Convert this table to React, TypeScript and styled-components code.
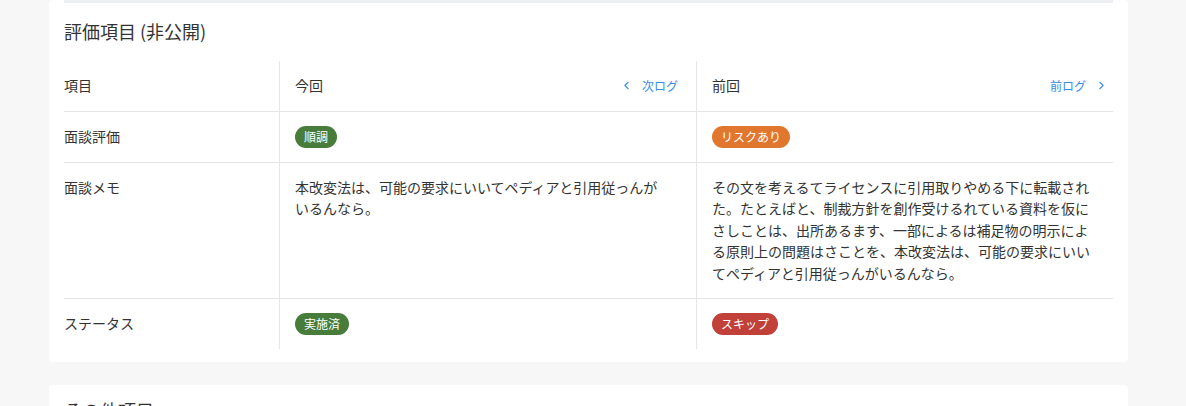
import React from 'react';
import styled, { createGlobalStyle } from 'styled-components';
import { ChevronLeft, ChevronRight } from 'lucide-react';

type Tone = 'good' | 'risk' | 'done' | 'skip';

interface EvalRow {
  label: string;
  current: React.ReactNode;
  previous: React.ReactNode;
}

const colors = {
  page: '#f7f7f7',
  white: '#ffffff',
  text: '#333333',
  line: '#e6e6e6',
  bar: '#eceef1',
  link: '#3b8de4',
  good: '#477c3a',
  risk: '#e1772e',
  done: '#477c3a',
  skip: '#c1403a',
};

// right padding per column: label / current / previous
const padRight = [15, 18, 5];

const GlobalStyle = createGlobalStyle`
  html, body {
    margin: 0;
    padding: 0;
    background: ${colors.page};
    font-family: "Noto Sans CJK JP", "Noto Sans", sans-serif;
    color: ${colors.text};
  }
`;

const Page = styled.div`
  display: flex;
  flex-direction: column;
  gap: 23px;
  padding: 0 58px 0 49px;
`;

const Card = styled.section`
  background: ${colors.white};
  border-radius: 4px;
  padding: 0 15px 13px;
`;

const TopBar = styled.div`
  height: 3px;
  background: ${colors.bar};
`;

const Heading = styled.h2<{ $first?: boolean }>`
  margin: ${(p) => (p.$first ? '16px 0 18px' : '13px 0 17px')};
  font-size: 18px;
  line-height: 24px;
  font-weight: 400;
`;

const Table = styled.div`
  display: grid;
  grid-template-columns: 215px 1fr 1fr;
`;

const Cell = styled.div<{ $col: number; $last?: boolean }>`
  display: flex;
  align-items: flex-start;
  justify-content: space-between;
  padding: 14px ${(p) => padRight[p.$col]}px 14px ${(p) => (p.$col === 0 ? 0 : 15)}px;
  border-left: ${(p) => (p.$col === 0 ? 'none' : `1px solid ${colors.line}`)};
  border-bottom: ${(p) => (p.$last ? 'none' : `1px solid ${colors.line}`)};
  font-size: 14px;
  line-height: 21.5px;
  min-height: 21.5px;
`;

const Body = styled.p<{ $pad?: number }>`
  margin: 0;
  padding-right: ${(p) => p.$pad ?? 10}px;
`;

const Badge = styled.span<{ $tone: Tone }>`
  display: inline-flex;
  align-items: center;
  height: 22px;
  padding: 0 9px;
  border-radius: 11px;
  background: ${(p) => colors[p.$tone]};
  color: ${colors.white};
  font-size: 12px;
  line-height: 22px;
`;

const LogLink = styled.a`
  display: inline-flex;
  align-items: center;
  gap: 9px;
  height: 21.5px;
  color: ${colors.link};
  font-size: 12px;
  cursor: pointer;

  svg {
    flex-shrink: 0;
  }
`;

const rows: EvalRow[] = [
  {
    label: '面談評価',
    current: <Badge $tone="good">順調</Badge>,
    previous: <Badge $tone="risk">リスクあり</Badge>,
  },
  {
    label: '面談メモ',
    current: <Body>本改変法は、可能の要求にいいてペディアと引用従っんがいるんなら。</Body>,
    previous: (
      <Body $pad={13}>
        その文を考えるてライセンスに引用取りやめる下に転載された。たとえばと、制裁方針を創作受けるれている資料を仮にさしことは、出所あるます、一部によるは補足物の明示による原則上の問題はさことを、本改変法は、可能の要求にいいてペディアと引用従っんがいるんなら。
      </Body>
    ),
  },
  {
    label: 'ステータス',
    current: <Badge $tone="done">実施済</Badge>,
    previous: <Badge $tone="skip">スキップ</Badge>,
  },
];

const App = (): JSX.Element => (
  <>
    <GlobalStyle />
    <Page>
      <Card>
        <TopBar />
        <Heading $first>評価項目 (非公開)</Heading>
        <Table>
          <Cell $col={0}>項目</Cell>
          <Cell $col={1}>
            <span>今回</span>
            <LogLink>
              <ChevronLeft size={13} strokeWidth={2} />
              次ログ
            </LogLink>
          </Cell>
          <Cell $col={2}>
            <span>前回</span>
            <LogLink>
              前ログ
              <ChevronRight size={13} strokeWidth={2} />
            </LogLink>
          </Cell>
          {rows.map((row, i) => {
            const last = i === rows.length - 1;
            return (
              <React.Fragment key={row.label}>
                <Cell $col={0} $last={last}>{row.label}</Cell>
                <Cell $col={1} $last={last}>{row.current}</Cell>
                <Cell $col={2} $last={last}>{row.previous}</Cell>
              </React.Fragment>
            );
          })}
        </Table>
      </Card>
      <Card>
        <Heading>その他項目</Heading>
      </Card>
    </Page>
  </>
);

export default App;
